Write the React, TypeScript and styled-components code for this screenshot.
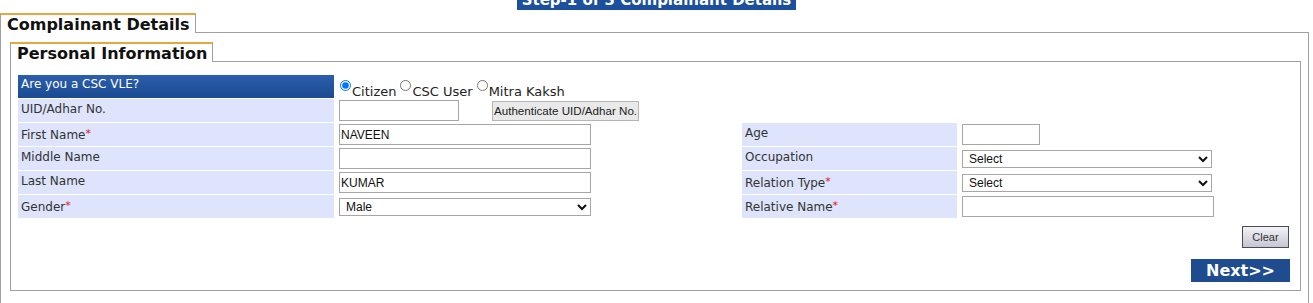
import React from "react";
import styled, { createGlobalStyle } from "styled-components";

const GlobalStyle = createGlobalStyle`
	html, body {
		margin: 0;
		padding: 0;
		background: #fff;
	}
	body {
		font-family: "DejaVu Sans", Verdana, sans-serif;
		font-size: 12px;
		color: #222;
	}
`;

const Page = styled.div`
	width: 1309px;
	overflow: hidden;
`;

const BannerRow = styled.div`
	display: flex;
	justify-content: center;
	margin-top: -10px;
	height: 20px;
	padding-left: 4px;
`;

const Banner = styled.div`
	background: #1c4f9c;
	color: #fff;
	font-weight: bold;
	font-size: 15px;
	line-height: 20px;
	padding: 0 5px;
	white-space: nowrap;
`;

const Fieldset = styled.div<{ $inner?: boolean }>`
	display: flex;
	flex-direction: column;
	margin-top: ${p => (p.$inner ? 0 : 3)}px;
`;

const LegendRow = styled.div`
	display: flex;
	align-items: flex-end;
`;

const Legend = styled.div`
	height: 18px;
	border-top: 2px solid #e6a640;
	border-left: 1px solid #a0a0a0;
	border-right: 1px solid #a0a0a0;
	padding: 0 5px 0 6px;
	font-size: 16px;
	font-weight: bold;
	line-height: 20px;
	color: #111;
	white-space: nowrap;
`;

const LegendLine = styled.div`
	flex: 1;
	border-bottom: 1px solid #a0a0a0;
`;

const FieldsetBody = styled.div<{ $inner?: boolean }>`
	border: 1px solid #a0a0a0;
	border-top: none;
	padding: ${p => (p.$inner ? "13px 10px 8px 7px" : "9px 7px 14px 9px")};
`;

const FormGrid = styled.div`
	display: grid;
	grid-template-columns: 316px 404px 215px 1fr;
	grid-auto-rows: 23px;
	column-gap: 2px;
	row-gap: 1px;
`;

const LabelCell = styled.div<{ $head?: boolean }>`
	padding: ${p => (p.$head ? "2px 3px" : "3px 3px")};
	line-height: 15px;
	font-size: 12px;
	color: ${p => (p.$head ? "#fff" : "#333")};
	background: ${p => (p.$head ? "linear-gradient(#2b5fae, #1a4a90)" : "#dde4fb")};
	white-space: nowrap;
`;

const ValueCell = styled.div`
	display: flex;
	align-items: center;
	padding-left: 3px;
`;

const Empty = styled.div``;

const Req = styled.span`
	color: #e0141e;
	font-size: 11px;
	vertical-align: 2px;
`;

const RadioGroup = styled.div`
	display: flex;
	align-items: flex-start;
	padding-left: 4px;
	padding-top: 5px;
	font-size: 13px;
	line-height: 16px;
	color: #222;
`;

const RadioLabel = styled.label`
	display: flex;
	align-items: flex-start;
	margin-right: 4px;
	white-space: nowrap;
`;

const Radio = styled.input`
	width: 11px;
	height: 11px;
	margin: 0 1px 0 0;
`;

const RadioText = styled.span`
	padding-top: 4px;
`;

const TextBox = styled.input<{ $w: number }>`
	box-sizing: border-box;
	width: ${p => p.$w}px;
	height: 21px;
	border: 1px solid #a6a6a6;
	padding: 1px 1px;
	margin: 0;
	font-family: "Liberation Sans", Arial, sans-serif;
	font-size: 12px;
	color: #111;
	background: #fff;
	outline: none;
`;

const Select = styled.select<{ $w: number }>`
	box-sizing: border-box;
	width: ${p => p.$w}px;
	height: 18px;
	border: 1px solid #a6a6a6;
	border-radius: 0;
	padding: 0 0 0 2px;
	margin: 0;
	font-family: "Liberation Sans", Arial, sans-serif;
	font-size: 12px;
	color: #111;
	background: #fff;
`;

const AuthButton = styled.button`
	height: 20px;
	margin-left: 33px;
	padding: 0 1px;
	border: 1px solid #b5b5b5;
	background: #e9e9e9;
	font-family: "Liberation Sans", Arial, sans-serif;
	font-size: 11.6px;
	color: #222;
	white-space: nowrap;
`;

const Actions = styled.div`
	display: flex;
	flex-direction: column;
	align-items: flex-end;
	margin-top: 8px;
`;

const ClearButton = styled.button`
	width: 47px;
	height: 22px;
	margin-right: 1px;
	border: 1px solid #4a4a55;
	background: linear-gradient(#f2f2f7, #c6c6d2);
	font-family: "Liberation Sans", Arial, sans-serif;
	font-size: 11px;
	color: #333;
	padding: 0;
`;

const NextButton = styled.button`
	margin-top: 11px;
	width: 99px;
	height: 23px;
	border: none;
	background: #1e4c8f;
	color: #fff;
	font-family: "DejaVu Sans", Verdana, sans-serif;
	font-size: 16px;
	font-weight: bold;
	padding: 0;
`;

type Field = { label: string; req?: boolean; control: React.ReactNode };

const Label = ({ text, req }: { text: string; req?: boolean }) => (
	<LabelCell>
		{text}
		{req && <Req>*</Req>}
	</LabelCell>
);

export default function App() {
	const left: Field[] = [
		{ label: "First Name", req: true, control: <TextBox $w={252} defaultValue="NAVEEN" /> },
		{ label: "Middle Name", control: <TextBox $w={252} /> },
		{ label: "Last Name", control: <TextBox $w={252} defaultValue="KUMAR" /> },
		{
			label: "Gender",
			req: true,
			control: (
				<Select $w={252} defaultValue="Male">
					<option>Male</option>
					<option>Female</option>
				</Select>
			)
		}
	];
	const right: Field[] = [
		{ label: "Age", control: <TextBox $w={78} /> },
		{
			label: "Occupation",
			control: (
				<Select $w={250}>
					<option>Select</option>
				</Select>
			)
		},
		{
			label: "Relation Type",
			req: true,
			control: (
				<Select $w={250}>
					<option>Select</option>
				</Select>
			)
		},
		{ label: "Relative Name", req: true, control: <TextBox $w={252} /> }
	];

	return (
		<>
			<GlobalStyle />
			<Page>
				<BannerRow>
					<Banner>Step-1 of 3 Complainant Details</Banner>
				</BannerRow>
				<Fieldset>
					<LegendRow>
						<Legend>Complainant Details</Legend>
						<LegendLine />
					</LegendRow>
					<FieldsetBody>
						<Fieldset $inner>
							<LegendRow>
								<Legend>Personal Information</Legend>
								<LegendLine />
							</LegendRow>
							<FieldsetBody $inner>
								<FormGrid>
									<LabelCell $head>Are you a CSC VLE?</LabelCell>
									<RadioGroup>
										<RadioLabel>
											<Radio type="radio" name="vle" defaultChecked />
											<RadioText>Citizen</RadioText>
										</RadioLabel>
										<RadioLabel>
											<Radio type="radio" name="vle" />
											<RadioText>CSC User</RadioText>
										</RadioLabel>
										<RadioLabel>
											<Radio type="radio" name="vle" />
											<RadioText>Mitra Kaksh</RadioText>
										</RadioLabel>
									</RadioGroup>
									<Empty />
									<Empty />

									<Label text="UID/Adhar No." />
									<ValueCell>
										<TextBox $w={120} />
										<AuthButton>Authenticate UID/Adhar No.</AuthButton>
									</ValueCell>
									<Empty />
									<Empty />

									{left.map((f, i) => (
										<React.Fragment key={f.label}>
											<Label text={f.label} req={f.req} />
											<ValueCell>{f.control}</ValueCell>
											<Label text={right[i].label} req={right[i].req} />
											<ValueCell>{right[i].control}</ValueCell>
										</React.Fragment>
									))}
								</FormGrid>
								<Actions>
									<ClearButton>Clear</ClearButton>
									<NextButton>Next&gt;&gt;</NextButton>
								</Actions>
							</FieldsetBody>
						</Fieldset>
					</FieldsetBody>
				</Fieldset>
			</Page>
		</>
	);
}
